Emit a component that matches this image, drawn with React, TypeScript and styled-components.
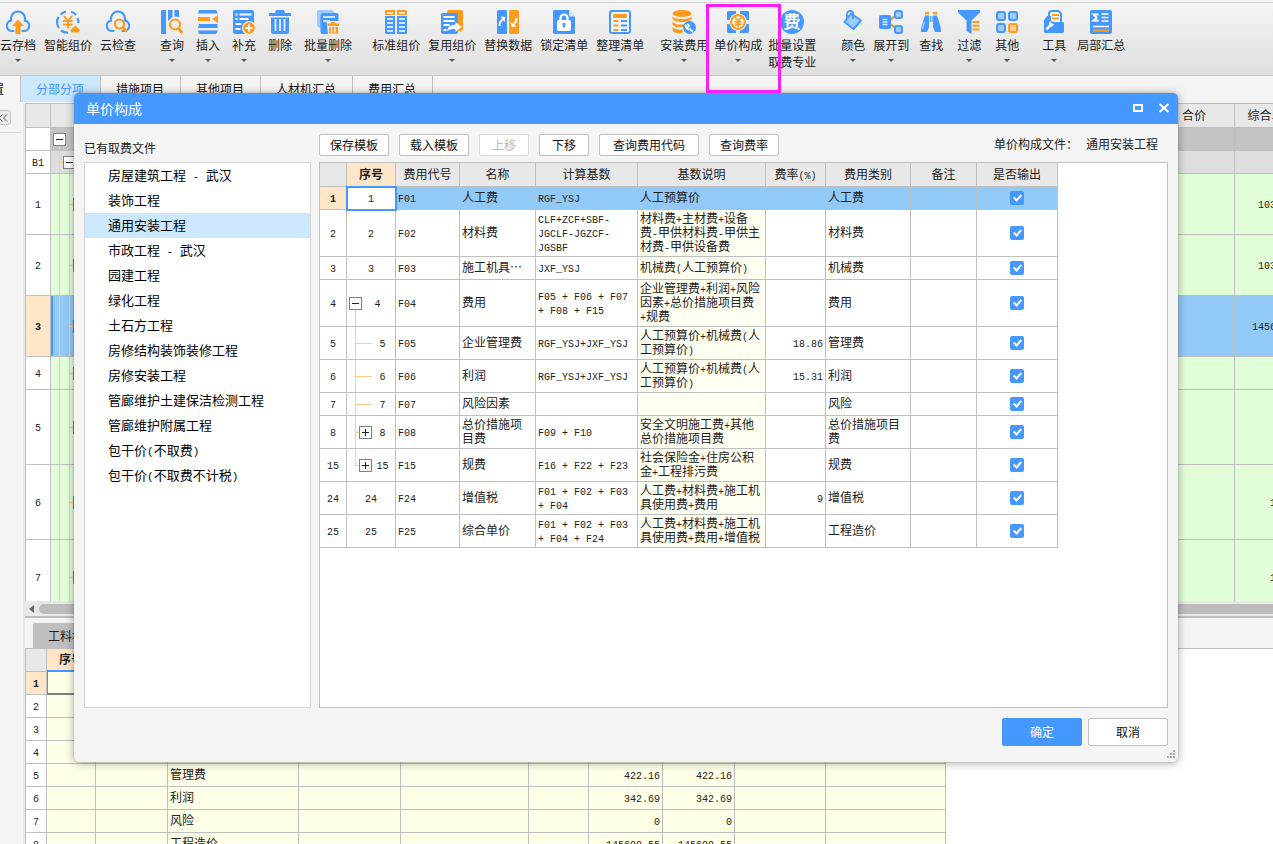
import React from 'react';
import styled, { createGlobalStyle, css } from 'styled-components';

const BLUE = '#4498ff';
const ORANGE = '#ff9b1a';
const LINE = '#bfbfbf';
const GUIDE = '#ffcc88';
const HEAD = '#e8e8e8';
const PEACH = '#ffe6c8';
const SELECTED = '#93c9f7';
const LIGHT = '#a0cbff';

const GlobalStyle = createGlobalStyle`
  *, *::before, *::after { box-sizing: border-box; }
  body { margin: 0; overflow: hidden; }
  body, button, input, table {
    font-family: "Noto Sans CJK SC", "Noto Sans", sans-serif;
    font-size: 12px;
    line-height: 14px;
    color: #222;
  }
`;

/* ---------- text ---------- */

const Latin = styled.span<{ $size: number }>`
  font-family: "Liberation Mono", monospace;
  font-size: ${p => p.$size}px;
  line-height: 0;
`;

/* Latin runs are set in a half-width monospace beside full-width Chinese. */
function Mixed({ text, size = 10 }: { text: string; size?: number }) {
  return (
    <>
      {text.split(/([\x20-\x7e]+)/).map((part, i) =>
        i % 2 ? <Latin key={i} $size={size}>{part}</Latin> : part
      )}
    </>
  );
}

/* ---------- toolbar icons ---------- */

const Svg = ({ children }: { children: React.ReactNode }) => (
  <svg width="24" height="24" viewBox="0 0 24 24" fill="none" aria-hidden="true">{children}</svg>
);

const cloud = (
  <path d="M7.500 21H6.200A5.200 5.200 0 0 1 5 10.700V8.500a7 7 0 0 1 14 0v2.200A5.200 5.200 0 0 1 17.800 21H16.500" stroke={BLUE} strokeWidth="2.200" strokeLinecap="round" />
);

const icons: Record<string, React.ReactNode> = {
  cloudSave: <Svg>{cloud}<path d="M12 9.500l6 6.500h-3.500V24h-5v-8H6z" fill={ORANGE} /></Svg>,
  smart: (
    <Svg>
      <path d="M10 1.500A10.500 10.500 0 0 0 4.500 4.500M2.500 7A10.500 10.500 0 0 0 3 18M5 20.500A10.500 10.500 0 0 0 12 22.500M15 1.800A10.500 10.500 0 0 1 20 5M21.500 8A10.500 10.500 0 0 1 22.300 13" stroke={BLUE} strokeWidth="2.200" />
      <path d="M8 6l4 5 4-5M7 11h9.500M7 14.500h9.500M12 10.500V18.500" stroke={ORANGE} strokeWidth="2" />
      <path d="M19.500 15.500l4.500 4.500-1 2.500h-8l-.5-2.500z" fill={ORANGE} />
    </Svg>
  ),
  cloudCheck: (
    <Svg>
      {cloud}
      <circle cx="13.500" cy="14" r="5.500" fill="#eee" />
      <circle cx="13.500" cy="14" r="4.500" fill="#eee" stroke={ORANGE} strokeWidth="2.200" />
      <path d="M17 17.500l4 4" stroke={ORANGE} strokeWidth="2.600" />
    </Svg>
  ),
  query: (
    <Svg>
      <path d="M1 1a1 1 0 0 1 1-1h4v24H2a1 1 0 0 1-1-1zM8 0h4.500v7L8 11zM14.500 0H18a1 1 0 0 1 1 1v6l-4.500-.5z" fill={BLUE} />
      <circle cx="15" cy="14.500" r="5" stroke={ORANGE} strokeWidth="2.200" />
      <path d="M18.500 18.500l4 4.500" stroke={ORANGE} strokeWidth="2.800" />
    </Svg>
  ),
  insert: (
    <Svg>
      <path d="M3 0h17l2 3.500H2zM3 14h18.500v4H2zM2 20.500h20l-2 3.500H3z" fill={BLUE} />
      <path d="M2 7h12v4H2zM22 5v8l-6-4z" fill={ORANGE} />
    </Svg>
  ),
  supplement: (
    <Svg>
      <rect x="1" width="21" height="24" rx="2" fill={BLUE} />
      <path d="M3.500 4.500h2M7.500 4.500h12M3.500 9h2M7.500 9h9M3.500 14h6M3.500 19h5" stroke="#fff" strokeWidth="1.800" />
      <circle cx="17" cy="18" r="7" fill="#eee" />
      <circle cx="17" cy="18" r="5.800" fill={ORANGE} />
      <path d="M13.500 18h7M17 14.500v7" stroke="#fff" strokeWidth="2" />
    </Svg>
  ),
  remove: (
    <Svg>
      <path d="M1 3h6l1-3h8l1 3h6v3H1zM3 7.500h18V22a2 2 0 0 1-2 2H5a2 2 0 0 1-2-2z" fill={BLUE} />
      <path d="M7.500 9v12M12 9v12M16.500 9v12" stroke="#e8f2ff" strokeWidth="1.800" />
    </Svg>
  ),
  batchRemove: (
    <Svg>
      <path d="M2 0h14l3 3v15H4l-3-2V1z" fill={LIGHT} />
      <rect x="4.500" y="3" width="18" height="21" rx="2" fill={BLUE} />
      <path d="M7 7h12M7 11h7" stroke="#fff" strokeWidth="1.600" />
      <path d="M10.500 11h12.500v13H12z" fill="#eee" />
      <path d="M11.500 13.500h3l1-1.500h3l1 1.500h3.500V16h-11.500zM13 17h9v6.500h-9z" fill={ORANGE} />
      <path d="M15.500 17.500v5M18.800 17.500v5" stroke="#fff" strokeWidth="1.300" />
    </Svg>
  ),
  standard: (
    <Svg>
      <path d="M2 0h9v5H1V1zM13 0h9l1 1v4H13z" fill={ORANGE} />
      <path d="M1 6h10v18H2l-1-1zM13 6h10v17l-1 1h-9z" fill={BLUE} />
      <path d="M3 3h6M15 3h6M3 9h6M15 9h6M3 13h6M15 13h6M3 17h6M15 17h6M3 21h6M15 21h6" stroke="#fff" strokeWidth="1.600" />
    </Svg>
  ),
  reuse: (
    <Svg>
      <rect x="7" width="16" height="21" rx="2" fill={ORANGE} />
      <rect x="1" y="3" width="17" height="21" rx="2" fill={BLUE} />
      <path d="M3.500 7h11M3.500 11h11M3.500 15h6M3.500 20h3" stroke="#fff" strokeWidth="1.800" />
      <path d="M7 21c1-5 5-6.500 8.500-6.300V12l6 5-6 5v-3c-3-.3-6 .2-8.500 2z" fill="#fff" />
    </Svg>
  ),
  replace: (
    <Svg>
      <rect x="1" width="10" height="24" rx="1.500" fill={BLUE} />
      <rect x="13" width="10" height="24" rx="1.500" fill={ORANGE} />
      <path d="M3.500 16c0-4 1-5.500 3.500-6.500" stroke="#fff" strokeWidth="2" />
      <path d="M4.500 6.500l5 .5-1 5zM14.500 12l1 5 5-.5z" fill="#fff" />
      <path d="M20.500 8c0 4-1 5.500-3.500 6.500" stroke="#fff" strokeWidth="2" />
    </Svg>
  ),
  lock: (
    <Svg>
      <path d="M2.500 0H17l6 7v15.500a1.500 1.500 0 0 1-1.500 1.500h-19A1.500 1.500 0 0 1 1 22.500v-21A1.500 1.500 0 0 1 2.500 0z" fill={BLUE} />
      <path d="M17 0l6 6.500h-6z" fill="#d3e7ff" />
      <rect x="5" y="10" width="14" height="11" rx="2" fill="#fff" />
      <path d="M8.500 10V8a3.500 3.500 0 0 1 7 0v2" stroke="#fff" strokeWidth="2.200" />
      <path d="M12 13.500v4M10.500 14h3" stroke={BLUE} strokeWidth="2" />
    </Svg>
  ),
  arrange: (
    <Svg>
      <rect x="2" y="1" width="20" height="22" rx="2" fill="#eef5ff" stroke={BLUE} strokeWidth="2" />
      <rect x="5" y="4" width="14" height="4" rx="1" fill={ORANGE} />
      <path d="M5.500 11h5M5.500 15.500h5M5.500 20h5" stroke={ORANGE} strokeWidth="1.800" />
      <path d="M13 11h6M13 15.500h6M13 20h6" stroke={BLUE} strokeWidth="1.800" />
    </Svg>
  ),
  install: (
    <Svg>
      <ellipse cx="10" cy="3.500" rx="9.500" ry="3.500" fill={ORANGE} />
      <path d="M.5 6.500C3 10 17 10 19.500 6.500V9C17 13 3 13 .5 9zM.5 11.500C3 15 10 15 12 14v2.500C9 18 2 17.500.5 14.500zM.5 17C2 19.500 7 20 10.500 19.500l.5 3C7 24 1 23 .5 20z" fill={ORANGE} />
      <circle cx="17.500" cy="17.500" r="6.500" fill={BLUE} />
      <path d="M15.200 13.800l2 2-1.500 1.500-2-2a3.300 3.300 0 0 0 4.500 3.800l2.800 3" stroke="#fff" strokeWidth="1.600" />
    </Svg>
  ),
  composition: (
    <Svg>
      <path d="M2 1h8v9H1V2zM14 1h8l1 1v8h-9zM1 14h9v9H2l-1-1zM14 14h9v8l-1 1h-8z" fill={BLUE} />
      <circle cx="12" cy="12" r="8.800" fill="#f4f4f4" />
      <circle cx="12" cy="12" r="6.800" fill="#fff" stroke={ORANGE} strokeWidth="2.200" />
      <path d="M9 7.500l3 3.500 3-3.500M8.500 11.800h7M8.500 14.300h7M12 11v6" stroke={ORANGE} strokeWidth="1.700" />
    </Svg>
  ),
  fee: (
    <Svg>
      <circle cx="12" cy="12" r="12" fill={BLUE} />
      <text x="12" y="18" textAnchor="middle" fontSize="17" fontWeight="700" fill="#fff" fontFamily='"Noto Sans CJK SC", sans-serif'>费</text>
    </Svg>
  ),
  color: (
    <Svg>
      <path d="M10 3.500l10 7-7.500 8.500L3.500 12z" fill={LIGHT} stroke={BLUE} strokeWidth="2" strokeLinejoin="round" />
      <path d="M6 8V4a3 3 0 0 1 6 0v5" stroke={BLUE} strokeWidth="1.800" />
      <path d="M1 21h22v3H1z" fill="#e0fbd5" />
      <path d="M20.500 12c1.500 2.500 1.500 4-.2 4.500-1.500-.5-1.300-2.500.2-4.500z" fill="#cfeec2" />
    </Svg>
  ),
  expand: (
    <Svg>
      <path d="M11 10l6-4.500M11 14l6 4.500" stroke={ORANGE} strokeWidth="2.200" />
      <rect x="0" y="5" width="12" height="14" rx="2" fill={BLUE} />
      <path d="M3.500 9.500h5M3.500 12h5M3.500 14.500h5" stroke="#d3e7ff" strokeWidth="1.500" />
      <rect x="16" y="1" width="7" height="7" rx="2" fill={LIGHT} stroke={BLUE} strokeWidth="2" />
      <rect x="16" y="16" width="7" height="7" rx="2" fill={LIGHT} stroke={BLUE} strokeWidth="2" />
    </Svg>
  ),
  find: (
    <Svg>
      <path d="M6 5.500h4v11.500l-2 5H2c0-6 2-10 4-16.500zM14 5.500h4c2 6.500 4 10.500 4 16.500h-6l-2-5zM10.800 6h1v6h-1zM12.500 6h1v6h-1z" fill={BLUE} />
      <path d="M6 2h4v2.500H6zM14 2h4v2.500h-4z" fill={ORANGE} />
      <path d="M5.500 12c-1 2.500-1.500 4.500-1.700 7" stroke="#d3e7ff" strokeWidth="1" />
    </Svg>
  ),
  filter: (
    <Svg>
      <path d="M1 0h22v2.500L14.500 10.500V24L9.500 21V10.500L1 2.500z" fill={BLUE} />
      <path d="M15.500 12h7M15.500 15.700h7M15.500 19.400h7" stroke={ORANGE} strokeWidth="2" />
    </Svg>
  ),
  other: (
    <Svg>
      <rect x="2" y="2" width="8" height="8" rx="2" fill={LIGHT} stroke={BLUE} strokeWidth="2" />
      <rect x="14" y="2" width="8" height="8" rx="2" fill={LIGHT} stroke={BLUE} strokeWidth="2" />
      <rect x="2" y="14" width="8" height="8" rx="2" fill={LIGHT} stroke={BLUE} strokeWidth="2" />
      <rect x="14" y="14" width="8" height="8" rx="2" fill="#ffcf90" stroke={ORANGE} strokeWidth="2" />
    </Svg>
  ),
  tool: (
    <Svg>
      <path d="M7 8V4a3 3 0 0 1 3-3h6.500L19 3.500V13" fill="#fff" stroke={BLUE} strokeWidth="2" />
      <path d="M10 5h7M10 8.500h7" stroke={ORANGE} strokeWidth="1.800" />
      <path d="M5 6h4v5l3 1h8.500a1.500 1.500 0 0 1 1.500 1.500v8a1.500 1.500 0 0 1-1.500 1.500h-17A1.500 1.500 0 0 1 2 21.500V10z" fill={BLUE} />
      <path d="M4.500 19.500l4-4.500" stroke="#fff" strokeWidth="2.600" />
      <path d="M7 13l1.500-2 1 2.500 2.500.5-1.500 2.500H8z" fill="#fff" />
    </Svg>
  ),
  summary: (
    <Svg>
      <rect x="1" width="22" height="24" rx="2" fill={BLUE} />
      <path d="M9.500 4.500h-5l3 3-3 3h5" stroke="#fff" strokeWidth="1.800" />
      <path d="M12.500 4h7M12.500 7.500h7M12.500 11h7M4 16.500h16" stroke="#fff" strokeWidth="1.700" />
      <path d="M4 20.500h16" stroke={ORANGE} strokeWidth="2" />
    </Svg>
  ),
};

/* ---------- main window ---------- */

const Page = styled.div`
  position: relative;
  display: flex;
  flex-direction: column;
  height: 100vh;
  overflow: hidden;
  background: #f4f4f4;
`;

const TopEdge = styled.div`
  flex: none;
  height: 3px;
  border-bottom: 1px solid #d6d6d6;
`;

const Toolbar = styled.header`
  display: flex;
  flex: none;
  height: 73px;
  padding-top: 7px;
  background: linear-gradient(#f4f4f4, #dfdfdf);
  border-bottom: 1px solid #c8c8c8;
`;

const ToolGroup = styled.div<{ $gap: number; $before: number }>`
  display: flex;
  flex: none;
  align-items: flex-start;
  gap: ${p => p.$gap}px;
  margin-left: ${p => p.$before}px;
`;

const ToolButton = styled.button<{ $marked?: boolean }>`
  position: relative;
  display: flex;
  flex-direction: column;
  align-items: center;
  padding: 0;
  border: 0;
  background: none;
  ${p => p.$marked && css`
    &::after {
      content: '';
      position: absolute;
      inset: -6px -19px auto -8px;
      height: 89px;
      border: 3px solid #fb1ef5;
      z-index: 3;
    }
  `}
`;

const ToolLabel = styled.span`
  margin-top: 2px;
  line-height: 17px;
  white-space: pre;
`;

const Caret = styled.i`
  margin-top: 6px;
  border: 3px solid transparent;
  border-top-color: #555;
  border-bottom-width: 0;
`;

const TabBar = styled.nav`
  display: flex;
  flex: none;
  height: 27px;
`;

const Tab = styled.button<{ $active?: boolean; $first?: boolean }>`
  flex: none;
  height: 26px;
  min-width: 80px;
  padding: 0 16px 0 15px;
  margin-left: ${p => (p.$first ? -59 : 0)}px;
  border: 0;
  border-right: 1px solid ${LINE};
  background: ${p => (p.$active ? '#cce8ff' : 'none')};
  color: ${p => (p.$active ? BLUE : '#111')};
`;

const Workspace = styled.main`
  display: flex;
  flex: 1;
  min-height: 0;
`;

const SideStrip = styled.aside`
  flex: none;
  width: 25px;
  padding-top: 7px;
  border-right: 2px solid #e8e8e8;
`;

const CollapseButton = styled.button`
  display: flex;
  align-items: center;
  justify-content: flex-end;
  width: 17px;
  height: 15px;
  margin: 0 0 7px -6px;
  padding: 0 2px 0 0;
  border: 1px solid ${LINE};
  border-radius: 3px;
  background: #ececec;
`;

const StripRule = styled.hr`
  width: 21px;
  margin: 0;
  border: 0;
  border-top: 1px solid #d8d8d8;
`;

const Panes = styled.div`
  display: flex;
  flex: 1;
  flex-direction: column;
  min-width: 0;
`;

const UpperPane = styled.section`
  flex: none;
  height: 498px;
  overflow: hidden;
  border: solid ${LINE};
  border-width: 1px 0 0 1px;
  background: #fff;
`;

const ScrollTrack = styled.div`
  display: flex;
  flex: none;
  align-items: center;
  gap: 5px;
  height: 15px;
  padding-left: 4px;
  background: #e8e8e8;
`;

const ScrollThumb = styled.div`
  flex: 1;
  height: 10px;
  border-radius: 5px 0 0 5px;
  background: #bdbdbd;
`;

const LowerTabs = styled.nav`
  display: flex;
  flex: none;
  align-items: flex-end;
  height: 32px;
  padding-left: 8px;
  border-top: 2px solid ${LINE};
`;

const LowerTab = styled.button`
  height: 25px;
  padding: 0 15px;
  border: 0;
  border-radius: 2px 2px 0 0;
  background: ${LINE};
`;

const LowerPane = styled.section`
  flex: 1;
  min-height: 0;
  overflow: hidden;
  border: solid ${LINE};
  border-width: 1px 0 0 1px;
  background: #fff;
`;

/* ---------- tables ---------- */

const Table = styled.table<{ $width: string }>`
  width: ${p => p.$width};
  table-layout: fixed;
  border-collapse: separate;
  border-spacing: 0;
`;

const Col = styled.col<{ $w?: number }>`
  width: ${p => (p.$w ? `${p.$w}px` : 'auto')};
`;

const cellBase = css`
  padding: 0 2px 2px;
  border: solid ${LINE};
  border-width: 0 1px 1px 0;
  overflow: hidden;
`;

const HeadRow = styled.tr<{ $h: number }>`
  height: ${p => p.$h}px;
`;

const Th = styled.th<{ $hot?: boolean }>`
  ${cellBase}
  background: ${p => (p.$hot ? PEACH : p.scope === 'row' ? '#fff' : HEAD)};
  font-weight: ${p => (p.$hot ? 700 : 400)};
  text-align: center;
  white-space: nowrap;
`;

const HotTh = styled(Th)`
  border-bottom: 2px solid ${BLUE};
`;

const Tr = styled.tr<{ $h: number; $bg?: string }>`
  height: ${p => p.$h}px;
  background: ${p => p.$bg || '#fff'};
`;

const Td = styled.td<{ $align?: string; $bg?: string }>`
  ${cellBase}
  background: ${p => p.$bg || 'transparent'};
  text-align: ${p => p.$align || 'left'};
  white-space: pre;
`;

const ActiveTd = styled(Td)`
  position: relative;
  outline: 2px solid ${BLUE};
  outline-offset: -1px;
  background: #fff;
`;

const MarkedTd = styled(Td)`
  border-left: 1px solid ${BLUE};
  border-bottom: 2px solid #808080;
`;

type Seg = [number, 'full' | 'top' | 'bottom' | number];

const drawGuides = (segs: Seg[]) =>
  segs
    .map(([x, kind]) => {
      const ink = `linear-gradient(${GUIDE}, ${GUIDE})`;
      if (typeof kind === 'number') return `${ink} ${x}px 50% / ${kind}px 1px no-repeat`;
      if (kind === 'full') return `${ink} ${x}px 0 / 1px 100% no-repeat`;
      return `${ink} ${x}px ${kind === 'top' ? '0' : '100%'} / 1px 50% no-repeat`;
    })
    .join(', ');

const TreeTd = styled(Td)<{ $guides: Seg[]; $marked?: boolean }>`
  padding-bottom: 0;
  background: ${p => drawGuides(p.$guides)};
  box-shadow: ${p => (p.$marked ? `inset 2px 0 ${BLUE}` : 'none')};
`;

const TreeRow = styled.div<{ $indent: number }>`
  display: flex;
  align-items: center;
  padding-left: ${p => p.$indent}px;
`;

const Toggle = styled.button<{ $open?: boolean }>`
  flex: none;
  width: 13px;
  height: 13px;
  padding: 0;
  border: 1px solid #808080;
  background:
    linear-gradient(#222, #222) center / 7px 1px no-repeat,
    linear-gradient(#222, #222) center / 1px ${p => (p.$open ? 1 : 7)}px no-repeat,
    #fff;
`;

const TreeNumber = styled.span`
  flex: 1;
  padding-bottom: 2px;
  text-align: center;
`;

const upperRows: { no: string; h: number; bg: string; tree: Seg[]; indent: number; open: boolean; price?: string }[] = [
  { no: '', h: 23, bg: '#c3c3c3', tree: [[8, 'bottom']], indent: 0, open: true },
  { no: 'B1', h: 23, bg: '#dedede', tree: [[8, 'full'], [8, 4], [18, 'bottom']], indent: 10, open: true },
  { no: '1', h: 61, bg: '#e2fed8', tree: [[8, 'full'], [18, 'full'], [18, 4]], indent: 20, open: false, price: '10356.20' },
  { no: '2', h: 61, bg: '#e2fed8', tree: [[8, 'full'], [18, 'full'], [18, 4]], indent: 20, open: false, price: '10356.20' },
  { no: '3', h: 61, bg: SELECTED, tree: [[8, 'full'], [18, 'full'], [18, 4]], indent: 20, open: false, price: '145699.55' },
  { no: '4', h: 33, bg: '#e2fed8', tree: [[8, 'full'], [18, 'full'], [18, 4]], indent: 20, open: false },
  { no: '5', h: 75, bg: '#e2fed8', tree: [[8, 'full'], [18, 'full'], [18, 4]], indent: 20, open: false },
  { no: '6', h: 75, bg: '#e2fed8', tree: [[8, 'full'], [18, 'full'], [18, 4]], indent: 20, open: false, price: '120.35' },
  { no: '7', h: 75, bg: '#e2fed8', tree: [[8, 'full'], [18, 'full'], [18, 4]], indent: 20, open: false, price: '120.35' },
];

const lowerRows: [string, string, string][] = [
  ['1', '', ''], ['2', '人工费', ''], ['3', '材料费', ''], ['4', '机械费', ''],
  ['5', '管理费', '422.16'], ['6', '利润', '342.69'], ['7', '风险', '0'], ['8', '工程造价', '145699.55'],
];

/* ---------- dialog ---------- */

const Dialog = styled.section`
  position: absolute;
  inset: 93px 95px 82px 74px;
  z-index: 2;
  display: flex;
  flex-direction: column;
  border-radius: 5px;
  background: #f4f4f4;
  box-shadow: 0 0 0 1px rgba(0, 0, 0, 0.06), 0 1px 10px rgba(0, 0, 0, 0.35);
`;

const TitleBar = styled.header`
  display: flex;
  flex: none;
  align-items: center;
  gap: 14px;
  height: 31px;
  padding: 0 8px 2px 12px;
  border-radius: 5px 5px 0 0;
  background: ${BLUE};
  color: #fff;
`;

const Title = styled.h1`
  flex: 1;
  margin: 0;
  font-size: 14px;
  line-height: 20px;
  font-weight: 400;
`;

const WindowButton = styled.button`
  display: flex;
  padding: 0;
  border: 0;
  background: none;
`;

const DialogBody = styled.div`
  display: flex;
  flex: 1;
  gap: 8px;
  min-height: 0;
  padding: 0 10px;
`;

const FilesColumn = styled.div`
  display: flex;
  flex: none;
  flex-direction: column;
  width: 227px;
`;

const FilesTitle = styled.h2`
  flex: none;
  height: 38px;
  margin: 0;
  padding-top: 15px;
  font-size: 12px;
  line-height: 18px;
  font-weight: 400;
`;

const FileList = styled.ul`
  flex: 1;
  margin: 0;
  padding: 0;
  border: 1px solid #d6d6d6;
  background: #fff;
  list-style: none;
`;

const FileItem = styled.li<{ $active?: boolean }>`
  height: 25px;
  padding-left: 23px;
  background: ${p => (p.$active ? '#cce8ff' : 'none')};
  color: #000;
  font-size: 13px;
  line-height: 23px;
  white-space: pre;
`;

const DetailColumn = styled.div`
  display: flex;
  flex: 1;
  flex-direction: column;
  min-width: 0;
`;

const Actions = styled.div`
  display: flex;
  flex: none;
  gap: 10px;
  height: 38px;
  padding: 10px 10px 6px 0;
`;

const Button = styled.button<{ $width: number; $primary?: boolean }>`
  width: ${p => p.$width}px;
  padding: 0;
  border: 1px solid ${p => (p.$primary ? BLUE : LINE)};
  border-radius: 2px;
  background: ${p => (p.$primary ? BLUE : '#fff')};
  color: ${p => (p.$primary ? '#fff' : '#111')};
  &:disabled {
    border-color: #d9d9d9;
    color: #bbb;
  }
`;

const FileName = styled.p`
  display: flex;
  gap: 8px;
  margin: 0 0 0 auto;
  line-height: 20px;
`;

const TablePanel = styled.div`
  flex: 1;
  min-height: 0;
  overflow: hidden;
  border: 1px solid ${LINE};
  background: #fff;
`;

const CheckTd = styled(Td)`
  padding: 0;
`;

const Check = styled.input`
  display: flex;
  justify-content: center;
  width: 14px;
  height: 14px;
  margin: 0 auto;
  padding-top: 2px;
  appearance: none;
  border-radius: 2px;
  background: #fff;
  border: 1px solid ${LINE};
  &:checked {
    border: 0;
    background: ${BLUE};
  }
  &:checked::after {
    content: '';
    width: 5px;
    height: 8px;
    border: solid #fff;
    border-width: 0 2px 2px 0;
    transform: rotate(42deg);
  }
`;

const Footer = styled.footer`
  display: flex;
  flex: none;
  justify-content: flex-end;
  gap: 6px;
  height: 54px;
  padding: 10px 10px 16px;
`;

const Grip = styled.svg`
  position: absolute;
  right: 3px;
  bottom: 4px;
`;

type FeeRow = {
  no: string; h: number; code: string; name: string; base: string; desc: string;
  rate?: string; kind: string; tree?: Seg[]; indent?: number; toggle?: 'open' | 'closed';
};

const feeRows: FeeRow[] = [
  { no: '1', h: 23, code: 'F01', name: '人工费', base: 'RGF_YSJ', desc: '人工预算价', kind: '人工费' },
  { no: '2', h: 47, code: 'F02', name: '材料费', base: 'CLF+ZCF+SBF-\nJGCLF-JGZCF-\nJGSBF', desc: '材料费+主材费+设备\n费-甲供材料费-甲供主\n材费-甲供设备费', kind: '材料费' },
  { no: '3', h: 23, code: 'F03', name: '施工机具…', base: 'JXF_YSJ', desc: '机械费(人工预算价)', kind: '机械费' },
  { no: '4', h: 47, code: 'F04', name: '费用', base: 'F05 + F06 + F07\n+ F08 + F15', desc: '企业管理费+利润+风险\n因素+总价措施项目费\n+规费', kind: '费用', tree: [[8, 'bottom']], indent: 0, toggle: 'open' },
  { no: '5', h: 33, code: 'F05', name: '企业管理费', base: 'RGF_YSJ+JXF_YSJ', desc: '人工预算价+机械费(人\n工预算价)', rate: '18.86', kind: '管理费', tree: [[8, 'full'], [8, 17]], indent: 23 },
  { no: '6', h: 33, code: 'F06', name: '利润', base: 'RGF_YSJ+JXF_YSJ', desc: '人工预算价+机械费(人\n工预算价)', rate: '15.31', kind: '利润', tree: [[8, 'full'], [8, 17]], indent: 23 },
  { no: '7', h: 23, code: 'F07', name: '风险因素', base: '', desc: '', kind: '风险', tree: [[8, 'full'], [8, 17]], indent: 23 },
  { no: '8', h: 33, code: 'F08', name: '总价措施项\n目费', base: 'F09 + F10', desc: '安全文明施工费+其他\n总价措施项目费', kind: '总价措施项目\n费', tree: [[8, 'full'], [8, 4]], indent: 10, toggle: 'closed' },
  { no: '15', h: 33, code: 'F15', name: '规费', base: 'F16 + F22 + F23', desc: '社会保险金+住房公积\n金+工程排污费', kind: '规费', tree: [[8, 'top'], [8, 4]], indent: 10, toggle: 'closed' },
  { no: '24', h: 33, code: 'F24', name: '增值税', base: 'F01 + F02 + F03\n+ F04', desc: '人工费+材料费+施工机\n具使用费+费用', rate: '9', kind: '增值税' },
  { no: '25', h: 33, code: 'F25', name: '综合单价', base: 'F01 + F02 + F03\n+ F04 + F24', desc: '人工费+材料费+施工机\n具使用费+费用+增值税', kind: '工程造价' },
];

const files = [
  '房屋建筑工程 - 武汉', '装饰工程', '通用安装工程', '市政工程 - 武汉', '园建工程', '绿化工程', '土石方工程',
  '房修结构装饰装修工程', '房修安装工程', '管廊维护土建保洁检测工程', '管廊维护附属工程', '包干价(不取费)', '包干价(不取费不计税)',
];

const feeHeads = ['费用代号', '名称', '计算基数', '基数说明', '费率(%)', '费用类别', '备注', '是否输出'];
const feeWidths = [27, 49, 64, 76, 102, 128, 60, 85, 66, 81];
const lowerWidths = [21, 49, 72, 131, 102, 128, 60, 74, 72, 91, 120];

type Tool = [icon: string, label: string, menu?: boolean];
const toolGroups: { before: number; gap: number; items: Tool[] }[] = [
  { before: 0, gap: 8, items: [['cloudSave', '云存档', true], ['smart', '智能组价'], ['cloudCheck', '云检查']] },
  { before: 24, gap: 12, items: [['query', '查询', true], ['insert', '插入', true], ['supplement', '补充', true], ['remove', '删除'], ['batchRemove', '批量删除', true]] },
  { before: 20, gap: 8, items: [['standard', '标准组价'], ['reuse', '复用组价', true], ['replace', '替换数据'], ['lock', '锁定清单'], ['arrange', '整理清单', true]] },
  { before: 16, gap: 6, items: [['install', '安装费用', true], ['composition', '单价构成', true], ['fee', '批量设置\n取费专业']] },
  { before: 25, gap: 8, items: [['color', '颜色', true], ['expand', '展开到', true]] },
  { before: 10, gap: 14, items: [['find', '查找'], ['filter', '过滤', true], ['other', '其他', true]] },
  { before: 23, gap: 11, items: [['tool', '工具', true], ['summary', '局部汇总']] },
];

function NumberCell({ row }: { row: FeeRow }) {
  if (row.no === '1') return <ActiveTd $align="center"><Mixed text={row.no} /></ActiveTd>;
  if (!row.tree) return <Td $align="center"><Mixed text={row.no} /></Td>;
  return (
    <TreeTd $guides={row.tree}>
      <TreeRow $indent={row.indent || 0}>
        {row.toggle && <Toggle $open={row.toggle === 'open'} aria-label={row.toggle === 'open' ? '收起' : '展开'} />}
        <TreeNumber><Mixed text={row.no} /></TreeNumber>
      </TreeRow>
    </TreeTd>
  );
}

function FeeTable() {
  return (
    <Table $width="738px">
      <colgroup>{feeWidths.map((w, i) => <Col key={i} $w={w} />)}</colgroup>
      <thead>
        <HeadRow $h={24}>
          <Th scope="col" />
          <Th scope="col" $hot>序号</Th>
          {feeHeads.map(h => <Th key={h} scope="col"><Mixed text={h} /></Th>)}
        </HeadRow>
      </thead>
      <tbody>
        {feeRows.map((r, i) => (
          <Tr key={r.no} $h={r.h} $bg={i === 0 ? SELECTED : '#fff'}>
            <Th scope="row" $hot={i === 0}><Mixed text={r.no} /></Th>
            <NumberCell row={r} />
            <Td><Mixed text={r.code} /></Td>
            <Td>{r.name}</Td>
            <Td><Mixed text={r.base} /></Td>
            <Td $bg={i === 0 ? undefined : '#fffff2'}><Mixed text={r.desc} /></Td>
            <Td $align="right"><Mixed text={r.rate || ''} /></Td>
            <Td>{r.kind}</Td>
            <Td />
            <CheckTd><Check type="checkbox" defaultChecked aria-label={`${r.code} 是否输出`} /></CheckTd>
          </Tr>
        ))}
      </tbody>
    </Table>
  );
}

function PriceDialog() {
  return (
    <Dialog role="dialog" aria-labelledby="dialog-title">
      <TitleBar>
        <Title id="dialog-title">单价构成</Title>
        <WindowButton aria-label="最大化">
          <svg width="12" height="12" viewBox="0 0 12 12"><rect x="2" y="3" width="8" height="6" fill="none" stroke="#fff" strokeWidth="2" /></svg>
        </WindowButton>
        <WindowButton aria-label="关闭">
          <svg width="12" height="12" viewBox="0 0 12 12"><path d="M1.500 2l9 8M10.500 2l-9 8" stroke="#fff" strokeWidth="2.200" /></svg>
        </WindowButton>
      </TitleBar>
      <DialogBody>
        <FilesColumn>
          <FilesTitle>已有取费文件</FilesTitle>
          <FileList>
            {files.map(f => <FileItem key={f} $active={f === '通用安装工程'}><Mixed text={f} size={11} /></FileItem>)}
          </FileList>
        </FilesColumn>
        <DetailColumn>
          <Actions>
            <Button $width={70}>保存模板</Button>
            <Button $width={70}>载入模板</Button>
            <Button $width={50} disabled>上移</Button>
            <Button $width={50}>下移</Button>
            <Button $width={100}>查询费用代码</Button>
            <Button $width={70}>查询费率</Button>
            <FileName><span>单价构成文件：</span><span>通用安装工程</span></FileName>
          </Actions>
          <TablePanel><FeeTable /></TablePanel>
        </DetailColumn>
      </DialogBody>
      <Footer>
        <Button $width={80} $primary>确定</Button>
        <Button $width={80}>取消</Button>
      </Footer>
      <Grip width="8" height="8" viewBox="0 0 8 8" fill="#aaa" aria-hidden="true">
        <path d="M6 0h2v2H6zM3 3h2v2H3zM6 3h2v2H6zM0 6h2v2H0zM3 6h2v2H3zM6 6h2v2H6z" />
      </Grip>
    </Dialog>
  );
}

export default function App() {
  return (
    <Page>
      <GlobalStyle />
      <TopEdge />
      <Toolbar>
        {toolGroups.map((g, i) => (
          <ToolGroup key={i} $gap={g.gap} $before={g.before}>
            {g.items.map(([icon, label, menu]) => (
              <ToolButton key={icon} $marked={icon === 'composition'}>
                {icons[icon]}
                <ToolLabel>{label}</ToolLabel>
                {menu && <Caret />}
              </ToolButton>
            ))}
          </ToolGroup>
        ))}
      </Toolbar>
      <TabBar>
        <Tab $first>项目设置</Tab>
        <Tab $active>分部分项</Tab>
        <Tab>措施项目</Tab>
        <Tab>其他项目</Tab>
        <Tab>人材机汇总</Tab>
        <Tab>费用汇总</Tab>
      </TabBar>
      <Workspace>
        <SideStrip>
          <CollapseButton aria-label="收起">
            <svg width="10" height="8" viewBox="0 0 10 8" fill="none" stroke="#555"><path d="M4.500.5L1 4l3.500 3.500M9 .5L5.500 4 9 7.500" /></svg>
          </CollapseButton>
          <StripRule />
        </SideStrip>
        <Panes>
          <UpperPane>
            <Table $width="calc(100% + 36px)">
              <colgroup><Col $w={25} /><Col /><Col $w={81} /><Col $w={74} /></colgroup>
              <thead>
                <HeadRow $h={24}><Th scope="col" /><Th scope="col" /><Th scope="col">合价</Th><Th scope="col">综合单价</Th></HeadRow>
              </thead>
              <tbody>
                {upperRows.map((r, i) => (
                  <Tr key={i} $h={r.h} $bg={r.bg}>
                    <Th scope="row" $hot={r.no === '3'}><Mixed text={r.no} /></Th>
                    <TreeTd $guides={r.tree} $marked={r.no === '3'}>
                      <TreeRow $indent={r.indent}><Toggle $open={r.open} aria-label={r.open ? '收起' : '展开'} /></TreeRow>
                    </TreeTd>
                    <Td />
                    <Td $align="right"><Mixed text={r.price || ''} /></Td>
                  </Tr>
                ))}
              </tbody>
            </Table>
          </UpperPane>
          <ScrollTrack>
            <svg width="5" height="8" viewBox="0 0 5 8" fill="#667"><path d="M5 0v8L0 4z" /></svg>
            <ScrollThumb />
          </ScrollTrack>
          <LowerTabs><LowerTab>工料机显示</LowerTab></LowerTabs>
          <LowerPane>
            <Table $width="920px">
              <colgroup>{lowerWidths.map((w, i) => <Col key={i} $w={w} />)}</colgroup>
              <thead>
                <HeadRow $h={23}>
                  <Th scope="col" /><HotTh scope="col" $hot>序号</HotTh>
                  {lowerWidths.slice(2).map((_, i) => <Th key={i} scope="col" />)}
                </HeadRow>
              </thead>
              <tbody>
                {lowerRows.map(([no, name, value], i) => {
                  const Lead = i === 0 ? MarkedTd : Td;
                  return (
                    <Tr key={no} $h={23} $bg="#ffffe8">
                      <Th scope="row" $hot={i === 0}><Mixed text={no} /></Th>
                      <Lead /><Td /><Td>{name}</Td><Td /><Td /><Td />
                      <Td $align="right"><Mixed text={value} /></Td>
                      <Td $align="right"><Mixed text={value} /></Td>
                      <Td /><Td />
                    </Tr>
                  );
                })}
              </tbody>
            </Table>
          </LowerPane>
        </Panes>
      </Workspace>
      <PriceDialog />
    </Page>
  );
}
